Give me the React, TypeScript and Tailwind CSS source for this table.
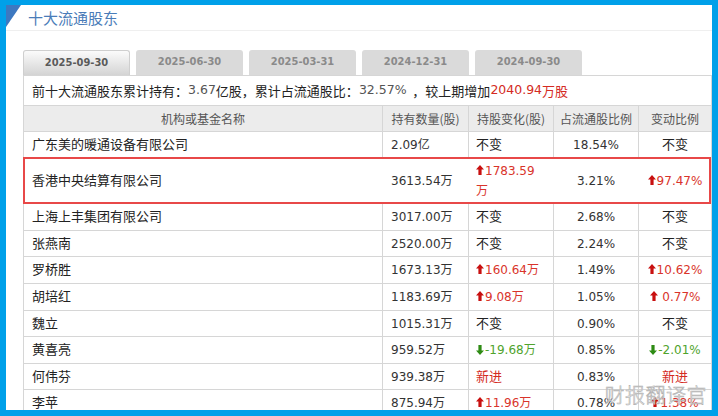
import React from 'react';

type Change = { kind: 'same' } | { kind: 'up'; text: string } | { kind: 'down'; text: string } | { kind: 'new' };

type Row = {
    name: string;
    amount: string;
    change: Change;
    ratio: string;
    delta: Change;
    h: string;
};

const rows: Row[] = [
    { name: '广东美的暖通设备有限公司', amount: '2.09亿', change: { kind: 'same' }, ratio: '18.54%', delta: { kind: 'same' }, h: 'h-[26px]' },
    { name: '香港中央结算有限公司', amount: '3613.54万', change: { kind: 'up', text: '1783.59万' }, ratio: '3.21%', delta: { kind: 'up', text: '97.47%' }, h: 'h-[46px]' },
    { name: '上海上丰集团有限公司', amount: '3017.00万', change: { kind: 'same' }, ratio: '2.68%', delta: { kind: 'same' }, h: 'h-[27px]' },
    { name: '张燕南', amount: '2520.00万', change: { kind: 'same' }, ratio: '2.24%', delta: { kind: 'same' }, h: 'h-[26px]' },
    { name: '罗桥胜', amount: '1673.13万', change: { kind: 'up', text: '160.64万' }, ratio: '1.49%', delta: { kind: 'up', text: '10.62%' }, h: 'h-[27px]' },
    { name: '胡培红', amount: '1183.69万', change: { kind: 'up', text: '9.08万' }, ratio: '1.05%', delta: { kind: 'up', text: ' 0.77%' }, h: 'h-[27px]' },
    { name: '魏立', amount: '1015.31万', change: { kind: 'same' }, ratio: '0.90%', delta: { kind: 'same' }, h: 'h-[26px]' },
    { name: '黄喜亮', amount: '959.52万', change: { kind: 'down', text: '-19.68万' }, ratio: '0.85%', delta: { kind: 'down', text: '-2.01%' }, h: 'h-[27px]' },
    { name: '何伟芬', amount: '939.38万', change: { kind: 'new' }, ratio: '0.83%', delta: { kind: 'new' }, h: 'h-[26px]' },
    { name: '李苹', amount: '875.94万', change: { kind: 'up', text: '11.96万' }, ratio: '0.78%', delta: { kind: 'up', text: '1.38%' }, h: 'h-[27px]' },
];

const tabs = ['2025-09-30', '2025-06-30', '2025-03-31', '2024-12-31', '2024-09-30'];

const cjk = "font-['DejaVu_Sans','Noto_Sans_CJK_SC',sans-serif]";

function UpArrow() {
    return (
        <svg width="8" height="10" viewBox="0 0 8 10" className="inline-block mr-[1px] -mt-[3px] align-middle">
            <polygon points="4,0 8,4.5 5.6,4.5 5.6,10 2.4,10 2.4,4.5 0,4.5" fill="#c81010" />
        </svg>
    );
}

function DownArrow() {
    return (
        <svg width="8" height="10" viewBox="0 0 8 10" className="inline-block mr-[1px] -mt-[2px] align-middle">
            <polygon points="4,10 8,5.5 5.6,5.5 5.6,0 2.4,0 2.4,5.5 0,5.5" fill="#2e8b14" />
        </svg>
    );
}

function ChangeText({ c, wrap }: { c: Change; wrap?: boolean }) {
    if (c.kind === 'same') return <span className="text-[#222] text-[13px]">不变</span>;
    if (c.kind === 'new') return <span className="text-[#d42a22] text-[13px]">新进</span>;
    if (c.kind === 'down') {
        return (
            <span className="text-[#4fa32c] whitespace-nowrap">
                <DownArrow />
                {c.text}
            </span>
        );
    }
    if (wrap) {
        // 数字太长，万字掉到第二行
        return (
            <span className="text-[#d9342b] leading-[20px]">
                <UpArrow />
                {c.text.slice(0, -1)}
                <br />
                {c.text.slice(-1)}
            </span>
        );
    }
    return (
        <span className="text-[#d9342b] whitespace-pre">
            <UpArrow />
            {c.text}
        </span>
    );
}

export default function App() {
    return (
        <div className={`w-[718px] h-[416px] bg-[#00a0e9] pt-[5px] px-[6px] pb-[6px] ${cjk}`}>
            <div className="relative h-full bg-white overflow-hidden">
                {/* corner mark */}
                <div className="absolute left-0 top-0 w-0 h-0 border-t-[22px] border-r-[15px] border-t-[#3d78c0] border-r-transparent" />

                <div className="h-[26px] border-b border-[#efefef] pl-[22px] flex items-center">
                    <span className="text-[15px] text-[#4a7cb8] font-['Noto_Sans_CJK_SC',sans-serif] leading-none">十大流通股东</span>
                </div>

                <div className="pl-[17px] mt-[19px]">
                    {/* tabs */}
                    <div className="flex gap-[6px] h-[25px] items-end">
                        {tabs.map((t, i) => (
                            <div
                                key={t}
                                className={`w-[107px] h-[25px] rounded-t-[3px] flex items-center justify-center text-[11px] font-bold font-['DejaVu_Sans_Condensed','DejaVu_Sans',sans-serif] ${
                                    i === 0
                                        ? 'border border-b-0 border-[#cfcfcf] bg-gradient-to-b from-[#fbfbfb] to-[#d4d4d4] text-[#5a5a5a]'
                                        : 'bg-[#dadada] text-[#8a8a8a]'
                                }`}
                            >
                                {t}
                            </div>
                        ))}
                    </div>

                    {/* summary */}
                    <div className="h-[30px] border-t border-l border-r border-[#d6d6d6] flex items-center pl-[8px] text-[13px] text-[#222] whitespace-nowrap">
                        <span className="font-['Noto_Sans_CJK_SC',sans-serif]">前十大流通股东累计持有：</span>
                        <span className="text-[#555] text-[12.5px]">3.67</span>
                        <span className="font-['Noto_Sans_CJK_SC',sans-serif]">亿股，累计占流通股比：</span>
                        <span className="text-[#555] text-[12.5px]">32.57%</span>
                        <span className="font-['Noto_Sans_CJK_SC',sans-serif]">&nbsp;&nbsp;，较上期增加</span>
                        <span className="text-[#d42a22] text-[12.5px]">2040.94</span>
                        <span className="text-[#d42a22] font-['Noto_Sans_CJK_SC',sans-serif]">万股</span>
                    </div>

                    {/* table */}
                    <div className="border-t border-r border-[#d6d6d6] text-[12px] text-[#333]">
                        <div className="grid grid-cols-[359px_86px_85px_85px_73px] h-[26px] bg-[#ececec] border-b border-[#d6d6d6] text-[#555]">
                            {['机构或基金名称', '持有数量(股)', '持股变化(股)', '占流通股比例', '变动比例'].map(h => (
                                <div key={h} className="border-l border-[#d6d6d6] flex items-center justify-center font-['Noto_Sans_CJK_SC',sans-serif]">
                                    {h}
                                </div>
                            ))}
                        </div>

                        {rows.map((r, i) => {
                            const hi = i === 1;
                            const line = hi ? 'border-l border-transparent' : 'border-l border-[#d6d6d6]';
                            return (
                                <div
                                    key={r.name}
                                    className={`relative grid grid-cols-[359px_86px_85px_85px_73px] ${r.h} border-b border-[#d6d6d6]`}
                                >
                                    <div className={`${line} flex items-center pl-[8px] text-[13px] text-[#222]`}>{r.name}</div>
                                    <div className={`${line} flex items-center pl-[8px]`}>{r.amount}</div>
                                    <div className={`${line} flex items-center pl-[7px]`}>
                                        <ChangeText c={r.change} wrap={hi} />
                                    </div>
                                    <div className={`${line} flex items-center justify-center`}>{r.ratio}</div>
                                    <div className={`${line} flex items-center justify-center`}>
                                        <ChangeText c={r.delta} />
                                    </div>
                                    {hi && (
                                        <div className="absolute -top-[1px] left-0 right-0 -bottom-[1px] border-2 border-[#e84848] pointer-events-none" />
                                    )}
                                </div>
                            );
                        })}
                    </div>
                </div>

                {/* watermark */}
                <div className="absolute right-[5px] bottom-[4px] text-[20px] tracking-[0.5px] text-white/85 [-webkit-text-stroke:0.6px_#b0b0b0] font-['Noto_Sans_CJK_SC',sans-serif] font-light leading-[22px]">
                    财报翻译官
                </div>
            </div>
        </div>
    );
}
